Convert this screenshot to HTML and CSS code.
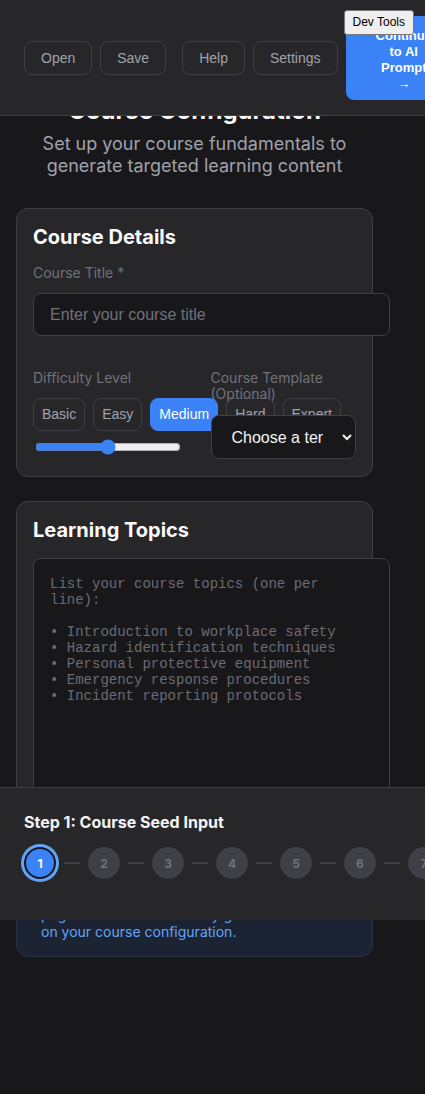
FILE: index.html
```html
<!DOCTYPE html>
<html lang="en">
<head>
<meta charset="utf-8">
<title>Course Configuration</title>
<link rel="stylesheet" href="styles.css">
</head>
<body>
<header class="topbar">
  <div class="btn-group">
    <button class="tb-btn">Open</button>
    <button class="tb-btn">Save</button>
  </div>
  <div class="btn-group">
    <button class="tb-btn">Help</button>
    <button class="tb-btn">Settings</button>
    <button class="primary-btn">Continue to AI Prompt →</button>
  </div>
</header>
<button class="devtools">Dev Tools</button>

<main class="main">
  <h1 class="page-title">Course Configuration</h1>
  <p class="page-sub">Set up your course fundamentals to generate targeted learning content</p>

  <section class="card">
    <h2 class="card-title">Course Details</h2>
    <label class="label">Course Title *</label>
    <input class="text-input" type="text" placeholder="Enter your course title">
    <div class="grid2">
      <div class="col">
        <label class="label">Difficulty Level</label>
        <div class="levels">
          <button class="lvl">Basic</button>
          <button class="lvl">Easy</button>
          <button class="lvl active">Medium</button>
          <button class="lvl">Hard</button>
          <button class="lvl">Expert</button>
        </div>
        <input class="range" type="range" min="1" max="5" value="3">
      </div>
      <div class="col">
        <label class="label label-wrap">Course Template (Optional)</label>
        <select class="select">
          <option>Choose a template...</option>
        </select>
      </div>
    </div>
  </section>

  <section class="card">
    <h2 class="card-title">Learning Topics</h2>
    <textarea class="topics" placeholder="List your course topics (one per line):&#10;&#10;• Introduction to workplace safety&#10;• Hazard identification techniques&#10;• Personal protective equipment&#10;• Emergency response procedures&#10;• Incident reporting protocols"></textarea>
  </section>

  <div class="info">
    <p>Learning objectives, assessments and content<br>pages will be automatically generated based on your course configuration.</p>
  </div>
</main>

<footer class="stepbar">
  <h3 class="step-title">Step 1: Course Seed Input</h3>
  <div class="steps">
    <div class="step current">1</div><div class="link"></div>
    <div class="step">2</div><div class="link"></div>
    <div class="step">3</div><div class="link"></div>
    <div class="step">4</div><div class="link"></div>
    <div class="step">5</div><div class="link"></div>
    <div class="step">6</div><div class="link"></div>
    <div class="step">7</div><div class="link"></div>
    <div class="step">8</div>
  </div>
</footer>
</body>
</html>
```
FILE: styles.css
```css
* { box-sizing: border-box; }
html, body { margin: 0; padding: 0; }
body {
  background: #18181b;
  color: #f4f4f5;
  font-family: Inter, "Noto Sans", sans-serif;
  height: 1094px;
  overflow: hidden;
}

.topbar {
  position: fixed;
  top: 0; left: 0; right: 0;
  height: 116px;
  background: #27272a;
  border-bottom: 1px solid #3f3f46;
  display: flex;
  align-items: center;
  gap: 16px;
  padding: 0 0 0 24px;
  z-index: 10;
}
.btn-group { display: flex; align-items: center; gap: 8px; flex-shrink: 0; }
.btn-group:last-child { flex-shrink: 1; min-width: 0; }
.tb-btn {
  font-family: "Liberation Sans", Arial, sans-serif;
  font-size: 14px;
  line-height: 16px;
  padding: 8px 16px;
  background: transparent;
  color: #a1a1aa;
  border: 1px solid #3f3f46;
  border-radius: 8px;
  flex-shrink: 0;
}
.primary-btn {
  font-family: "Liberation Sans", Arial, sans-serif;
  font-weight: 700;
  font-size: 13px;
  line-height: 16px;
  padding: 12px 30px 8px;
  background: #3b82f6;
  color: #ffffff;
  border: none;
  border-radius: 8px;
  width: min-content;
  flex-shrink: 0;
}
.devtools {
  position: fixed;
  top: 10px;
  right: 11px;
  z-index: 20;
  font-family: "Liberation Sans", Arial, sans-serif;
  font-size: 12px;
  line-height: 15px;
  padding: 4px 8px;
  background: #efefef;
  color: #000;
  border: 1px solid #767676;
  border-radius: 3px;
}

.main {
  width: 357px;
  margin-left: 16px;
  padding-top: 95px;
}
.page-title {
  margin: 0 0 6px;
  font-size: 24px;
  line-height: 32px;
  font-weight: 700;
  text-align: center;
  color: #fafafa;
}
.page-sub {
  margin: 0 0 31px;
  font-size: 18px;
  line-height: 22px;
  color: #a1a1aa;
  text-align: center;
}

.card {
  background: #27272a;
  border: 1px solid #3f3f46;
  border-radius: 12px;
  padding: 16px 16px 17px;
  margin-bottom: 24px;
}
.card-title {
  margin: 0 0 16px;
  font-size: 20px;
  line-height: 24px;
  font-weight: 700;
  color: #fafafa;
}
.label {
  display: block;
  font-size: 14px;
  line-height: 16px;
  color: #71717a;
  margin-bottom: 12px;
}
.label-wrap { margin-bottom: 13px; }
.text-input {
  box-sizing: content-box;
  display: block;
  width: 100%;
  height: 19px;
  padding: 11px 16px;
  margin: 0 0 34px;
  background: #18181b;
  border: 1px solid #3f3f46;
  border-radius: 8px;
  color: #f4f4f5;
  font-family: "Liberation Sans", Arial, sans-serif;
  font-size: 16px;
}
.text-input::placeholder { color: #71717a; }

.grid2 {
  display: grid;
  grid-template-columns: 1fr 1fr;
  column-gap: 32px;
}
.col { min-width: 0; }
.levels { display: flex; gap: 8px; }
.lvl {
  flex-shrink: 0;
  font-family: "Liberation Sans", Arial, sans-serif;
  font-size: 14px;
  line-height: 15px;
  padding: 8px 8px;
  background: transparent;
  color: #a1a1aa;
  border: 1px solid #3f3f46;
  border-radius: 8px;
}
.lvl.active { background: #3b82f6; border-color: #3b82f6; color: #ffffff; }
.range {
  display: block;
  width: 146px;
  margin: 8px 0 0 2px;
  accent-color: #3b82f6;
}
.select {
  display: block;
  width: 100%;
  height: 44px;
  padding: 0 16px 0 16px;
  background: #18181b;
  color: #f4f4f5;
  border: 1px solid #3f3f46;
  border-radius: 8px;
  font-family: "Liberation Sans", Arial, sans-serif;
  font-size: 16px;
  color-scheme: dark;
}

.topics {
  box-sizing: content-box;
  display: block;
  width: 100%;
  height: 237px;
  padding: 17px 16px 16px;
  margin: 0;
  background: #18181b;
  border: 1px solid #3f3f46;
  border-radius: 8px;
  font-family: "Liberation Mono", "Courier New", monospace;
  font-size: 14px;
  line-height: 16px;
  color: #d4d4d8;
  resize: none;
}
.topics::placeholder { color: #6b6b72; }

.info {
  background: #1c2333;
  border: 1px solid #26344d;
  border-radius: 12px;
  padding: 16px 24px;
}
.info p {
  margin: 0;
  font-size: 14px;
  line-height: 17px;
  color: #60a5fa;
}

.stepbar {
  position: fixed;
  top: 787px;
  left: 0; right: 0;
  height: 133px;
  background: #27272a;
  border-top: 1px solid #3f3f46;
  padding: 22px 0 0 24px;
  overflow: hidden;
  z-index: 5;
}
.step-title {
  margin: 0 0 13px;
  font-size: 16px;
  line-height: 24px;
  font-weight: 700;
  color: #f4f4f5;
}
.steps { display: flex; align-items: center; }
.step {
  flex-shrink: 0;
  width: 32px; height: 32px;
  border-radius: 50%;
  background: #3f3f46;
  color: #71717a;
  font-size: 12px;
  font-weight: 700;
  display: flex;
  align-items: center;
  justify-content: center;
}
.step.current {
  background: #3b82f6;
  color: #ffffff;
  border: 2px solid #18181b;
  box-shadow: 0 0 0 3px #60a5fa;
}
.link {
  flex-shrink: 0;
  width: 16px;
  height: 2px;
  margin: 0 8px;
  background: #3f3f46;
}
```
